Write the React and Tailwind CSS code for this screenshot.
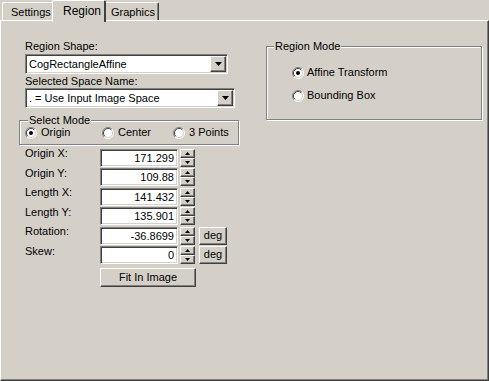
import React from 'react';

const sunken =
  'border border-t-[#808080] border-l-[#808080] border-r-white border-b-white shadow-[inset_1px_1px_0_#404040,inset_-1px_-1px_0_#d4d0c8]';
const raised =
  'border border-t-white border-l-white border-r-[#404040] border-b-[#404040] shadow-[inset_-1px_-1px_0_#808080]';
const etched = 'border border-[#808080] shadow-[inset_1px_1px_0_#fff,1px_1px_0_#fff]';

function Radio({ checked }) {
  return (
    <svg width="12" height="12" viewBox="0 0 12 12" className="shrink-0">
      <circle cx="6" cy="6" r="5" fill="#fff" />
      <path d="M2.1 9.9 A5.5 5.5 0 0 1 9.9 2.1" stroke="#808080" fill="none" />
      <path d="M9.9 2.1 A5.5 5.5 0 0 1 2.1 9.9" stroke="#fff" fill="none" />
      <path d="M2.8 9.2 A4.5 4.5 0 0 1 9.2 2.8" stroke="#404040" fill="none" />
      <path d="M9.2 2.8 A4.5 4.5 0 0 1 2.8 9.2" stroke="#d4d0c8" fill="none" />
      {checked && <circle cx="6" cy="6" r="2" fill="#000" />}
    </svg>
  );
}

function Arrow({ up, w = 7 }) {
  const h = Math.ceil(w / 2);
  return (
    <svg width={w} height={h} viewBox={`0 0 ${w} ${h}`}>
      <polygon points={up ? `0,${h} ${w},${h} ${w / 2},0` : `0,0 ${w},0 ${w / 2},${h}`} fill="#000" />
    </svg>
  );
}

function Combo({ value, width }) {
  return (
    <div className={`${sunken} h-[20px] flex items-center bg-white p-[1px]`} style={{ width }}>
      <span className="flex-1 pl-[2px] truncate">{value}</span>
      <div className={`${raised} w-[16px] h-full bg-[#d4d0c8] flex items-center justify-center`}>
        <Arrow w={7} />
      </div>
    </div>
  );
}

function Spin() {
  return (
    <div className="flex flex-col w-[15px] h-[18px] ml-[2px]">
      <div className={`${raised} h-[9px] bg-[#d4d0c8] flex items-center justify-center`}>
        <Arrow up w={5} />
      </div>
      <div className={`${raised} h-[9px] bg-[#d4d0c8] flex items-center justify-center`}>
        <Arrow w={5} />
      </div>
    </div>
  );
}

function Row({ label, value, deg }) {
  return (
    <div className="flex items-center h-[19.5px]">
      <span className="w-[81px] pl-[6px] self-start -mt-[1px]">{label}</span>
      <div className={`${sunken} w-[78px] h-[18px] bg-white text-right pr-[3px] leading-[16px]`}>{value}</div>
      <Spin />
      {deg && (
        <div className={`${raised} ml-[4px] w-[28px] h-[18px] bg-[#d4d0c8] text-center leading-[15px]`}>deg</div>
      )}
    </div>
  );
}

export default function App() {
  return (
    <div
      className="w-[489px] h-[381px] bg-[#d4d0c8] text-black text-[11px] leading-[13px] flex flex-col overflow-hidden"
      style={{ fontFamily: '"Liberation Sans", Arial, sans-serif' }}
    >
      {/* Tabs */}
      <div className="flex items-end h-[20px] pl-[2px]">
        <div className="h-[18px] w-[50px] border-l border-t border-white rounded-tl-[2px] pl-[8px] pt-[3px]">Settings</div>
        <div className="relative z-10 h-[22px] -mb-[2px] w-[54px] bg-[#d4d0c8] border-l border-t border-white border-r-2 border-r-[#404040] rounded-t-[2px] pl-[10px] pt-[4px] text-[12px]">
          Region
        </div>
        <div className="h-[18px] w-[53px] border-t border-white border-r border-r-[#404040] shadow-[inset_-1px_0_0_#808080] rounded-tr-[2px] pl-[5px] pt-[3px]">
          Graphics
        </div>
      </div>

      {/* Panel */}
      <div className="flex-1 border-t border-l border-white border-r border-b border-r-[#404040] border-b-[#404040] shadow-[inset_-1px_-1px_0_#808080] flex">
        <div className="ml-[18px] mt-[19px] w-[220px] flex flex-col">
          <div className="pl-[6px]">Region Shape:</div>
          <div className="ml-[6px] mt-[1px]">
            <Combo value="CogRectangleAffine" width={203} />
          </div>
          <div className="pl-[6px] mt-[1px]">Selected Space Name:</div>
          <div className="ml-[6px]">
            <Combo value=". = Use Input Image Space" width={210} />
          </div>

          <div className={`relative ${etched} mt-[12px] h-[25px] flex items-center pl-[5px]`}>
            <span className="absolute -top-[7px] left-[8px] bg-[#d4d0c8] px-[1px]">Select Mode</span>
            <div className="flex items-center gap-[4px] w-[77px]">
              <Radio checked />
              <span>Origin</span>
            </div>
            <div className="flex items-center gap-[4px] w-[71px]">
              <Radio />
              <span>Center</span>
            </div>
            <div className="flex items-center gap-[4px]">
              <Radio />
              <span>3 Points</span>
            </div>
          </div>

          <div className="mt-[3px] flex flex-col">
            <Row label="Origin X:" value="171.299" />
            <Row label="Origin Y:" value="109.88" />
            <Row label="Length X:" value="141.432" />
            <Row label="Length Y:" value="135.901" />
            <Row label="Rotation:" value="-36.8699" deg />
            <Row label="Skew:" value="0" deg />
          </div>
          <div className={`${raised} ml-[81px] mt-[3px] w-[96px] h-[19px] bg-[#d4d0c8] text-center leading-[16px]`}>
            Fit In Image
          </div>
        </div>

        <div className={`relative ${etched} ml-[27px] mt-[25px] w-[216px] h-[74px] flex flex-col gap-[10px] pl-[25px] pt-[19px]`}>
          <span className="absolute -top-[7px] left-[7px] bg-[#d4d0c8] px-[1px]">Region Mode</span>
          <div className="flex items-center gap-[3px]">
            <Radio checked />
            <span>Affine Transform</span>
          </div>
          <div className="flex items-center gap-[3px]">
            <Radio />
            <span>Bounding Box</span>
          </div>
        </div>
      </div>
    </div>
  );
}
